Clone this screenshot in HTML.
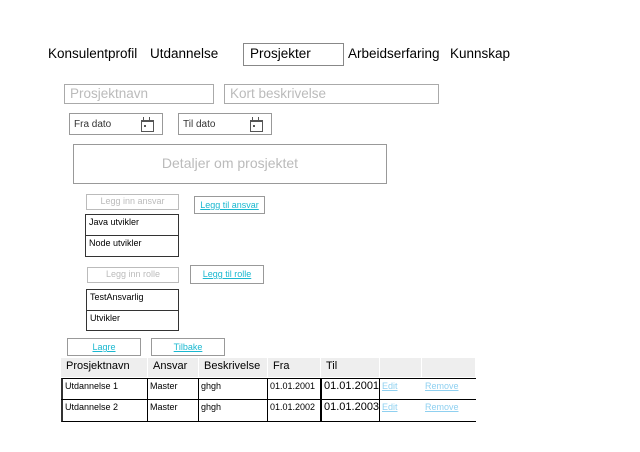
<!DOCTYPE html>
<html><head><style>
body{margin:0;width:640px;height:452px;background:#fff;font-family:"Liberation Sans",Arial,sans-serif;position:relative;overflow:hidden}
.a{position:absolute;box-sizing:border-box;white-space:nowrap}
.nav{font-size:13.5px;color:#000;top:46px}
.in{border:1px solid #aaa;color:#bbb;font-size:13.5px;padding-left:5px;line-height:18px}
.d{border:1px solid #999;font-size:10px;color:#333;padding-left:4px;line-height:22px}
.cal{position:absolute;right:8px;top:6px;width:11px;height:9px;border:1.5px solid #555;border-top-width:2px}
.cal:before{content:"";position:absolute;left:1px;top:-5px;width:1px;height:3px;background:#555;box-shadow:6px 0 #555}
.cal:after{content:"";position:absolute;left:2px;top:3px;width:2px;height:2px;background:#555}
.btn{border:1px solid #999;font-size:9px;color:#1ab8d0;text-decoration:underline;text-align:center;line-height:16px}
.ph{border:1.5px solid #bbb;font-size:9px;color:#bbb;text-align:center;line-height:13px}
.lst{border:1.5px solid #333;font-size:9px}
.lst div{height:20px;line-height:14px;padding-left:3px;box-sizing:border-box}
.lst div+div{border-top:1.5px solid #333}
.th{background:#eee;font-size:11px;color:#000;height:19px;line-height:17px;padding-left:5px;top:358px}
.td{font-size:9px;line-height:14px;padding-left:2px;height:21px}
.lk{color:#8fd0f0;text-decoration:underline}
</style></head><body>
<div class="a nav" style="left:48px">Konsulentprofil</div>
<div class="a nav" style="left:150px">Utdannelse</div>
<div class="a" style="left:243px;top:43px;width:101px;height:23px;border:1px solid #888;font-size:13.5px;padding-left:6px;line-height:20px">Prosjekter</div>
<div class="a nav" style="left:348px">Arbeidserfaring</div>
<div class="a nav" style="left:450px">Kunnskap</div>

<div class="a in" style="left:64px;top:84px;width:150px;height:20px">Prosjektnavn</div>
<div class="a in" style="left:224px;top:84px;width:215px;height:20px">Kort beskrivelse</div>
<div class="a d" style="left:69px;top:113px;width:94px;height:22px">Fra dato<span class="cal"></span></div>
<div class="a d" style="left:178px;top:113px;width:94px;height:22px">Til dato<span class="cal"></span></div>
<div class="a" style="left:73px;top:144px;width:314px;height:40px;border:1px solid #999;color:#bbb;font-size:14px;text-align:center;line-height:37px">Detaljer om prosjektet</div>

<div class="a ph" style="left:86px;top:194px;width:93px;height:16px">Legg inn ansvar</div>
<div class="a btn" style="left:194px;top:196px;width:71px;height:18px">Legg til ansvar</div>
<div class="a lst" style="left:85px;top:214px;width:94px;height:43px"><div>Java utvikler</div><div>Node utvikler</div></div>
<div class="a ph" style="left:87px;top:267px;width:92px;height:16px">Legg inn rolle</div>
<div class="a btn" style="left:190px;top:265px;width:74px;height:19px">Legg til rolle</div>
<div class="a lst" style="left:86px;top:289px;width:93px;height:42px"><div>TestAnsvarlig</div><div>Utvikler</div></div>
<div class="a btn" style="left:67px;top:338px;width:74px;height:18px">Lagre</div>
<div class="a btn" style="left:151px;top:338px;width:74px;height:18px">Tilbake</div>

<div class="a th" style="left:61px;width:86px">Prosjektnavn</div>
<div class="a th" style="left:148px;width:50px">Ansvar</div>
<div class="a th" style="left:199px;width:68px">Beskrivelse</div>
<div class="a th" style="left:268px;width:52px">Fra</div>
<div class="a th" style="left:321px;width:58px">Til</div>
<div class="a th" style="left:380px;width:41px"></div>
<div class="a th" style="left:422px;width:53px"></div>

<div class="a" style="left:61px;top:378px;width:415px;height:44px;border-top:1px solid #000;border-bottom:1px solid #000;border-left:2px solid #333"></div>
<div class="a" style="left:61px;top:399px;width:415px;height:1px;background:#000"></div>
<div class="a" style="left:147px;top:378px;width:1px;height:44px;background:#000"></div>
<div class="a" style="left:198px;top:378px;width:1px;height:44px;background:#000"></div>
<div class="a" style="left:267px;top:378px;width:1px;height:44px;background:#000"></div>
<div class="a" style="left:320px;top:378px;width:2px;height:44px;background:#000"></div>
<div class="a" style="left:379px;top:378px;width:1px;height:44px;background:#000"></div>

<div class="a td" style="left:63px;top:379px">Utdannelse 1</div>
<div class="a td" style="left:148px;top:379px">Master</div>
<div class="a td" style="left:199px;top:379px">ghgh</div>
<div class="a td" style="left:268px;top:379px">01.01.2001</div>
<div class="a td" style="left:322px;top:379px;font-size:11px">01.01.2001</div>
<div class="a td lk" style="left:380px;top:379px">Edit</div>
<div class="a td lk" style="left:423px;top:379px">Remove</div>

<div class="a td" style="left:63px;top:400px">Utdannelse 2</div>
<div class="a td" style="left:148px;top:400px">Master</div>
<div class="a td" style="left:199px;top:400px">ghgh</div>
<div class="a td" style="left:268px;top:400px">01.01.2002</div>
<div class="a td" style="left:322px;top:400px;font-size:11px">01.01.2003</div>
<div class="a td lk" style="left:380px;top:400px">Edit</div>
<div class="a td lk" style="left:423px;top:400px">Remove</div>
</body></html>
